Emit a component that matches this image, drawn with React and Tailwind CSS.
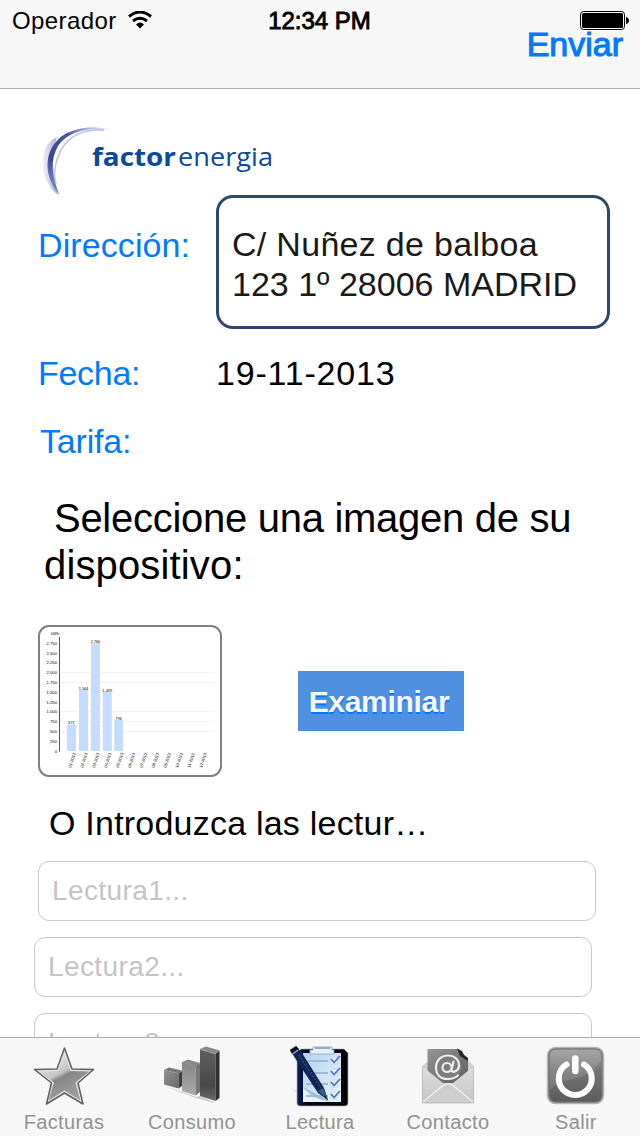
import React from 'react';

const Logo = () => (
  <svg viewBox="38 120 240 80" className="block h-[80px] w-[240px]">
    <defs>
      <linearGradient id="swoosh" x1="0" y1="1" x2="1" y2="0">
        <stop offset="0" stopColor="#3b4796" stopOpacity="0.25" />
        <stop offset="0.3" stopColor="#37459a" />
        <stop offset="0.6" stopColor="#4a56a6" />
        <stop offset="1" stopColor="#8d94cc" stopOpacity="0.1" />
      </linearGradient>
      <linearGradient id="haze" x1="0" y1="0" x2="1" y2="0">
        <stop offset="0" stopColor="#9fa5d6" stopOpacity="0.15" />
        <stop offset="1" stopColor="#8b92cb" stopOpacity="0.8" />
      </linearGradient>
    </defs>
    <path d="M57 137 C46 142 41 153 43 166 C44 178 50 189 58 195 L54 174 L52 154 Z" fill="url(#haze)" />
    <path d="M112 130 C92 124 66 128 55 143 C43 158 46 181 60 195 C51 177 50 160 58 146 C68 131 90 127 112 130 Z" fill="url(#swoosh)" />
    <path d="M104 130 C84 129 69 136 61 150 C55 162 53 175 56 184" fill="none" stroke="#b7b6e0" strokeWidth="1.8" opacity="0.8" />
    <text x="92" y="166" textLength="84" lengthAdjust="spacingAndGlyphs" fill="#0b4a9b" className="font-['Open_Sans'] text-[25px] font-bold">factor</text>
    <text x="178" y="166" textLength="95" lengthAdjust="spacingAndGlyphs" fill="#0b4a9b" className="font-['Open_Sans'] text-[25px]">energia</text>
  </svg>
);

const bars = [
  { x: 67, y: 724.5, label: '671' },
  { x: 79, y: 690, label: '1.564' },
  { x: 91, y: 643, label: '2.766' },
  { x: 102.8, y: 692, label: '1.499' },
  { x: 114.2, y: 720, label: '796' },
];
const ticks = ['2.750', '2.500', '2.250', '2.000', '1.750', '1.500', '1.250', '1.000', '750', '500', '250', '0'];
const months = ['01', '02', '03', '04', '05', '06', '07', '08', '09', '10', '11', '12'];

const Chart = () => (
  <svg viewBox="40 627 180 148" className="block h-[148px] w-[180px] font-['Liberation_Sans',sans-serif] text-[4.2px]">
    {[672.5, 682.5, 711.5, 721.5, 731.5].map((y) => (
      <path key={y} d={`M61 ${y}H214`} stroke="#f2f2f2" strokeWidth="1" />
    ))}
    <path d="M59.5 637V751.5" stroke="#555" strokeWidth="1" />
    <text x="51" y="635">kWh</text>
    {ticks.map((t, i) => (
      <text key={t} x="57" y={644.8 + i * 9.8} textAnchor="end">{t}</text>
    ))}
    {bars.map((b) => (
      <g key={b.x}>
        <rect x={b.x} y={b.y} width="9" height={751 - b.y} fill="#c6dcff" />
        <text x={b.x + 4.5} y={b.y - 0.5} textAnchor="middle" className="text-[3.8px]">{b.label}</text>
      </g>
    ))}
    {months.map((m, i) => (
      <text key={m} transform={`translate(${71 + i * 11.9} 768) rotate(-72)`}>{m}-2013</text>
    ))}
  </svg>
);

const StarIcon = () => (
  <svg viewBox="0 0 64 64" className="block h-[64px] w-[64px]">
    <defs>
      <linearGradient id="star" x1="0.2" y1="0" x2="0.75" y2="1">
        <stop offset="0.1" stopColor="#e2e2e2" />
        <stop offset="0.42" stopColor="#c4c4c4" />
        <stop offset="0.5" stopColor="#878787" />
        <stop offset="1" stopColor="#a5a5a5" />
      </linearGradient>
    </defs>
    <path d="M32.500 3 L40 24 L61.500 24.500 L46 38 L51 59 L32.500 48 L14.500 59 L19.500 38 L2.500 24.500 L25 24 Z" fill="#e4e4e4" stroke="#606060" strokeWidth="1.5" strokeLinejoin="round" />
    <path d="M32.500 8 L38.500 26 L57 26.500 L43.500 37.500 L48.500 55.500 L32.500 45.500 L16.500 55.500 L22 37.500 L7 26.500 L26.500 26 Z" fill="url(#star)" />
  </svg>
);

const BarsIcon = () => (
  <svg viewBox="0 0 64 64" className="block h-[64px] w-[64px]">
    <defs>
      <linearGradient id="b1" x1="0" y1="0" x2="1" y2="1"><stop stopColor="#929292" /><stop offset="1" stopColor="#686868" /></linearGradient>
      <linearGradient id="b2" x1="0" y1="0" x2="0" y2="1"><stop stopColor="#858585" /><stop offset="1" stopColor="#ababab" /></linearGradient>
      <linearGradient id="b3" x1="0" y1="0" x2="0" y2="1"><stop stopColor="#5f5f5f" /><stop offset="0.7" stopColor="#484848" /><stop offset="1" stopColor="#6a6a6a" /></linearGradient>
    </defs>
    <path d="M5 41 L20 46 L36 52 L40 51 L56 58 L52 57.500 L36 53 L20 47 Z" fill="#ccc" />
    <path d="M4 25 L9 22.500 L22 25.500 L18.500 28.500 Z" fill="#777" />
    <path d="M4 25 L18.500 28.500 V43.500 L4 39.500 Z" fill="url(#b1)" />
    <path d="M18.500 28.500 L22 26 V41 L18.500 43.500 Z" fill="#3f3f3f" />
    <path d="M22 17 L28 14.500 L40 18 L35.500 21.500 Z" fill="#888" />
    <path d="M22 17 L35.500 21 V50.500 L22 46 Z" fill="url(#b2)" />
    <path d="M35.500 21 L40 18 V47 L35.500 50.500 Z" fill="#777" />
    <path d="M40 4 L46 1.500 L59.500 5.500 L55.500 8.500 Z" fill="#888" />
    <path d="M40 4 L55.500 8.500 V56 L40 51 Z" fill="url(#b3)" />
    <path d="M55.500 8.500 L59.500 5.500 V53 L55.500 56 Z" fill="#303030" />
    <path d="M40.500 4.500 L55.500 8.800 L59 5.500" fill="none" stroke="#b5b5b5" strokeWidth="0.7" />
  </svg>
);

const ClipboardIcon = () => (
  <svg viewBox="0 0 64 64" className="block h-[64px] w-[64px]">
    <defs>
      <linearGradient id="board" x1="0" y1="0" x2="1" y2="0"><stop stopColor="#0a225c" /><stop offset="0.2" stopColor="#020511" /><stop offset="1" stopColor="#000005" /></linearGradient>
      <linearGradient id="sheet" x1="0" y1="0" x2="1" y2="1"><stop stopColor="#b4d2ec" /><stop offset="1" stopColor="#eaf4fd" /></linearGradient>
    </defs>
    <path d="M2 43 L16 49 L12 51 Z" fill="#e5e5e5" />
    <path d="M13 4 H56 L60 8 V58 Q60 61 57 61 H12 Q9 61 9 58 V8 Z" fill="url(#board)" stroke="#a9adb5" strokeWidth="0.7" />
    <path d="M15 8 H53 V57 H15 Z" fill="url(#sheet)" />
    <path d="M15 44 Q31 53 53 47 V57 H15 Z" fill="#e8f3fc" />
    <path d="M15 42 C22 51 29 54 42 57 C29 48 24 47 15 42" fill="#9fc2e1" />
    <path d="M25 2 H44 V5 H46 V9 H22 V5 H25 Z" fill="#e9eff6" stroke="#8ba4c5" strokeWidth="0.8" />
    <path d="M27 2 H42 V4 H27 Z" fill="#8ca9ce" />
    {[15, 27, 38, 50].map((y) => (
      <g key={y}>
        <path d={`M18 ${y + 1}H40`} stroke="#9dbadb" strokeWidth="2" />
        <path d={`M42.500 ${y - 3}h7v7h-7z`} fill="#e3eef8" stroke="#c2d3e5" strokeWidth="0.7" />
        <path d={`M43 ${y - 1}l3 3.500 6-6.500`} fill="none" stroke="#4d7ab4" strokeWidth="1.800" />
      </g>
    ))}
    <path d="M2 5 L8 1 L14 8 L36 43 L40 55 L30 48 L7 13 Z" fill="#102553" />
    <path d="M2 5 L8 1 L11 4 L4 9 Z" fill="#071020" />
    <path d="M4.500 9 L10 5" stroke="#98aac7" strokeWidth="1.500" />
    <path d="M11 10 L33 43" stroke="#2b4a80" strokeWidth="1.500" strokeDasharray="2 1.500" />
    <path d="M30 46 L35 43 L40 55 Z" fill="#38598b" />
    <path d="M37 51 L40.500 56 L36 52 Z" fill="#030817" />
  </svg>
);

const MailIcon = () => (
  <svg viewBox="0 0 64 64" className="block h-[64px] w-[64px]">
    <defs>
      <linearGradient id="env" x1="0" y1="0" x2="0" y2="1"><stop stopColor="#dedede" /><stop offset="1" stopColor="#c6c6c6" /></linearGradient>
      <linearGradient id="paper" x1="0" y1="0" x2="1" y2="1"><stop stopColor="#969696" /><stop offset="1" stopColor="#5b5b5b" /></linearGradient>
    </defs>
    <path d="M6 21 L14 15 H52 L58 21 V58 H6 Z" fill="#d0d0d0" />
    <path d="M11.500 4 H42 L52 14 V38 H11.500 Z" fill="url(#paper)" />
    <path d="M41 3.500 L46 6 L48 10 L52 13 V16 L44 11 Z" fill="#252525" />
    <path d="M6 21 L27 38 Q32 42 37 38 L58 21 V58 H6 Z" fill="url(#env)" />
    <circle cx="32" cy="22" r="13.500" fill="#7d7d7d" />
    <g fill="none" stroke="#ededed" strokeLinecap="round">
      <circle cx="31" cy="22.500" r="4.500" strokeWidth="2.200" />
      <path d="M37.500 16.500 L35.500 25 C36 29 43 26 43 20.500 C43 14 38 10.500 32 10.500 C25 10.500 20 15.500 20 22.500 C20 30 25 34 32 34 C36 34 39 33 42 30.500" strokeWidth="2.200" />
    </g>
    <path d="M6.500 57.500 L27 40.500 Q32 37 37 40.500 L57.500 57.500 Z" fill="#cecece" />
    <path d="M7 57 L27 40.500 Q32 37 37 40.500 L57 57" fill="none" stroke="#eee" strokeWidth="1.600" />
    <path d="M6.500 22 V58 H57.500 V22" fill="none" stroke="#b5b5b5" strokeWidth="0.800" />
  </svg>
);

const PowerIcon = () => (
  <svg viewBox="0 0 64 64" className="block h-[64px] w-[64px]">
    <defs>
      <linearGradient id="pw" x1="0" y1="0" x2="0" y2="1"><stop stopColor="#9a9a9a" /><stop offset="0.45" stopColor="#727272" /><stop offset="1" stopColor="#5c5c5c" /></linearGradient>
    </defs>
    <rect x="3.500" y="2.500" width="56" height="56" rx="8" fill="#777" stroke="#b5b5b5" strokeWidth="1.500" />
    <rect x="5.500" y="4.500" width="52" height="52" rx="6" fill="url(#pw)" />
    <path d="M12 5 H52 Q57 5 57 11 V16 Q46 31 29 34 Q13 36 6 45 V11 Q6 5 12 5" fill="#fff" opacity="0.12" />
    <path d="M22.500 19.500 A16.500 16.500 0 1 0 40 19.500" fill="none" stroke="#fff" strokeWidth="6" strokeLinecap="round" />
    <path d="M31.300 13.500 V26" stroke="#fff" strokeWidth="6.500" strokeLinecap="round" />
  </svg>
);

const tabs = [
  { name: 'Facturas', icon: <StarIcon /> },
  { name: 'Consumo', icon: <BarsIcon /> },
  { name: 'Lectura', icon: <ClipboardIcon /> },
  { name: 'Contacto', icon: <MailIcon /> },
  { name: 'Salir', icon: <PowerIcon /> },
];

const App = () => {
  return (
    <div className="flex h-[1136px] w-[640px] flex-col overflow-hidden bg-white font-['Liberation_Sans',Arial,sans-serif] text-black">
      <header className="h-[89px] shrink-0 border-b border-[#b2b2b2] bg-[#f7f7f7]">
        <div className="grid h-10 grid-cols-3 items-center pr-[11px] pl-3">
          <div className="flex items-center gap-[11px] text-[24px] tracking-[0.4px]">
            <span className="pt-[2px]">Operador</span>
            <svg viewBox="0 0 24 18" className="h-[18px] w-[24px]">
              <path d="M1 5.500 Q12 -3.500 23 5.500" fill="none" stroke="#000" strokeWidth="3" />
              <path d="M5 10 Q12 4.500 19 10" fill="none" stroke="#000" strokeWidth="3" />
              <path d="M8 13.500 Q12 9.500 16 13.500 L12 17.500 Z" />
            </svg>
          </div>
          <div className="pt-[2px] pr-[2px] text-center text-[24px] [-webkit-text-stroke:0.9px_#000]">12:34 PM</div>
          <div className="flex justify-end">
            <svg viewBox="0 0 49 19" className="h-[19px] w-[49px]">
              <rect x="0.500" y="0.500" width="44" height="18" rx="3" fill="none" stroke="#000" />
              <rect x="2" y="2" width="41" height="15" rx="1.500" />
              <path d="M46 6 Q49 7 49 9.500 Q49 12 46 13 Z" />
            </svg>
          </div>
        </div>
        <div className="-mt-[16px] flex justify-end pr-[17px]">
          <button type="button" className="text-[34px] leading-[40px] text-[#007aff] [-webkit-text-stroke:1.1px_#007aff]">Enviar</button>
        </div>
      </header>

      <main className="min-h-0 flex-1 overflow-hidden">
        <div className="h-[106px] pt-[31px] pl-[38px]">
          <Logo />
        </div>

        <div className="flex pl-[38px] text-[34px] leading-[40px]">
          <div className="w-[178px] pt-[30px] tracking-[0.1px] text-[#007aff]">Dirección:</div>
          <div className="h-[134px] w-[394px] rounded-[17px] border-[3px] border-[#2f466f] pt-[26px] pl-[13px] text-[#1a1a1a]">
            <span className="tracking-[0.3px]">C/ Nuñez de balboa</span>
            <br />
            123 1º 28006 MADRID
          </div>
        </div>
        <div className="mt-[24px] flex pl-[38px] text-[34px] leading-[40px]">
          <div className="w-[178px] tracking-[-0.3px] text-[#007aff]">Fecha:</div>
          <div className="tracking-[0.8px]">19-11-2013</div>
        </div>
        <div className="mt-[28px] pl-[40px] text-[34px] leading-[40px] tracking-[-0.2px] text-[#007aff]">Tarifa:</div>

        <div className="mt-[34px] pl-[44px] text-[40px] leading-[47px]">
          <span className="pl-[10px] tracking-[-0.28px]">Seleccione una imagen de su</span>
          <br />
          <span className="tracking-[0.15px]">dispositivo:</span>
        </div>

        <div className="mt-[36px] flex items-center pl-[38px]">
          <div className="h-[152px] w-[184px] overflow-hidden rounded-[11px] border-2 border-[#808080]">
            <Chart />
          </div>
          <button type="button" className="ml-[76px] h-[60px] w-[166px] bg-[#5090e0] pr-[4px] text-[30px] font-bold tracking-[-0.3px] text-[#f7f7f7] [text-shadow:0_2px_0_#007aff]">
            Examiniar
          </button>
        </div>

        <div className="mt-[26px] pl-[49px] text-[34px] leading-[40px] tracking-[0.22px]">O Introduzca las lectur…</div>

        <div className="mt-[18px] flex flex-col gap-4 pl-[34px] text-[28px]">
          <input className="ml-[4px] h-[60px] w-[558px] rounded-[11px] border border-[#c8c8c8] px-[13px] tracking-[0.4px] placeholder:text-[#c4c4c6]" placeholder="Lectura1..." />
          <input className="h-[60px] w-[558px] rounded-[11px] border border-[#c8c8c8] px-[13px] tracking-[0.4px] placeholder:text-[#c4c4c6]" placeholder="Lectura2..." />
          <input className="h-[60px] w-[558px] rounded-[11px] border border-[#c8c8c8] px-[13px] tracking-[0.4px] placeholder:text-[#c4c4c6]" placeholder="Lectura3..." />
        </div>
      </main>

      <nav className="grid h-[99px] shrink-0 grid-cols-5 border-t border-[#acacac] bg-[#f7f7f7]">
        {tabs.map((tab) => (
          <button key={tab.name} type="button" className="flex flex-col items-center pt-[7px] text-[20px] tracking-[0.35px] text-[#929292]">
            {tab.icon}
            <span className="mt-[1px] leading-[24px]">{tab.name}</span>
          </button>
        ))}
      </nav>
    </div>
  );
};

export default App;
